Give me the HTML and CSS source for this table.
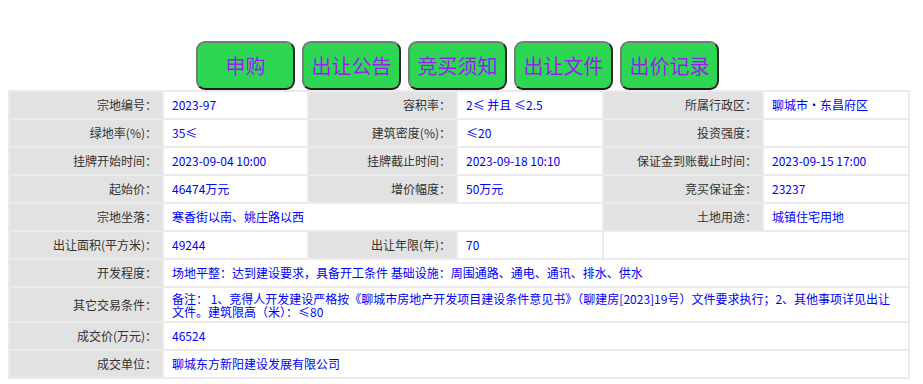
FILE: index.html
```html
<!DOCTYPE html>
<html lang="zh-CN">
<head>
<meta charset="utf-8">
<title>土地出让详情</title>
<link rel="stylesheet" href="styles.css">
</head>
<body>
<div class="actions">
  <a class="btn">申购</a>
  <a class="btn">出让公告</a>
  <a class="btn">竞买须知</a>
  <a class="btn">出让文件</a>
  <a class="btn">出价记录</a>
</div>
<table class="info">
  <colgroup>
    <col class="c-l1"><col class="c-v1"><col class="c-l2"><col class="c-v2"><col class="c-l3"><col class="c-v3">
  </colgroup>
  <tr>
    <td class="lbl">宗地编号：</td><td class="val">2023-97</td>
    <td class="lbl">容积率：</td><td class="val">2≤ 并且 ≤2.5</td>
    <td class="lbl">所属行政区：</td><td class="val">聊城市·东昌府区</td>
  </tr>
  <tr>
    <td class="lbl">绿地率(%)：</td><td class="val">35≤</td>
    <td class="lbl">建筑密度(%)：</td><td class="val">≤20</td>
    <td class="lbl">投资强度：</td><td class="val"></td>
  </tr>
  <tr>
    <td class="lbl">挂牌开始时间：</td><td class="val">2023-09-04 10:00</td>
    <td class="lbl">挂牌截止时间：</td><td class="val">2023-09-18 10:10</td>
    <td class="lbl">保证金到账截止时间：</td><td class="val">2023-09-15 17:00</td>
  </tr>
  <tr>
    <td class="lbl">起始价：</td><td class="val">46474万元</td>
    <td class="lbl">增价幅度：</td><td class="val">50万元</td>
    <td class="lbl">竞买保证金：</td><td class="val">23237</td>
  </tr>
  <tr>
    <td class="lbl">宗地坐落：</td><td class="val" colspan="3">寒香街以南、姚庄路以西</td>
    <td class="lbl">土地用途：</td><td class="val">城镇住宅用地</td>
  </tr>
  <tr>
    <td class="lbl">出让面积(平方米)：</td><td class="val">49244</td>
    <td class="lbl">出让年限(年)：</td><td class="val">70</td>
    <td class="val" colspan="2"></td>
  </tr>
  <tr>
    <td class="lbl">开发程度：</td><td class="val" colspan="5">场地平整：达到建设要求，具备开工条件 基础设施：周围通路、通电、通讯、排水、供水</td>
  </tr>
  <tr class="tall">
    <td class="lbl">其它交易条件：</td><td class="val" colspan="5">备注： 1、竞得人开发建设严格按《聊城市房地产开发项目建设条件意见书》（聊建房[2023]19号）文件要求执行；2、其他事项详见出让文件。建筑限高（米）：≤80</td>
  </tr>
  <tr>
    <td class="lbl">成交价(万元)：</td><td class="val" colspan="5">46524</td>
  </tr>
  <tr>
    <td class="lbl">成交单位：</td><td class="val" colspan="5">聊城东方新阳建设发展有限公司</td>
  </tr>
</table>
</body>
</html>
```

FILE: styles.css
```css
html, body {
  margin: 0;
  padding: 0;
  background: #ffffff;
}

body {
  font-family: "Noto Sans CJK SC", "Liberation Sans", sans-serif;
  font-size: 12px;
}

.actions {
  display: flex;
  justify-content: center;
  gap: 7px;
  padding: 41px 8px 0 0;
  height: 49px;
}

.btn {
  box-sizing: border-box;
  width: 99px;
  height: 49px;
  display: flex;
  align-items: center;
  justify-content: center;
  background: #2dd653;
  border: 2px solid;
  border-color: #7a7a7a #2a2a2a #1e1e1e #7a7a7a;
  border-radius: 9px;
  color: #9a1cf2;
  font-size: 20px;
  line-height: 1;
  text-decoration: none;
  cursor: pointer;
}

.info {
  margin: 0 0 0 8px;
  width: 902px;
  table-layout: fixed;
  border-collapse: separate;
  border-spacing: 2px;
  background: #ebebeb;
}

.c-l1 { width: 152px; }
.c-v1 { width: 143px; }
.c-l2 { width: 147px; }
.c-v2 { width: 144px; }
.c-l3 { width: 158px; }
.c-v3 { width: 144px; }

.info td {
  height: 26px;
  padding: 0 8px;
  line-height: 14px;
  vertical-align: middle;
  box-sizing: border-box;
}

.info td.lbl {
  background: #e2e2e2;
  color: #333333;
  text-align: right;
  padding: 0 5px 0 4px;
}

.info td.val {
  background: #ffffff;
  color: #0000ff;
  text-align: left;
  padding: 0 6px 0 8px;
}

.info tr.tall td {
  height: 33px;
  padding-top: 2px;
  padding-bottom: 2px;
  line-height: 13px;
}
```
